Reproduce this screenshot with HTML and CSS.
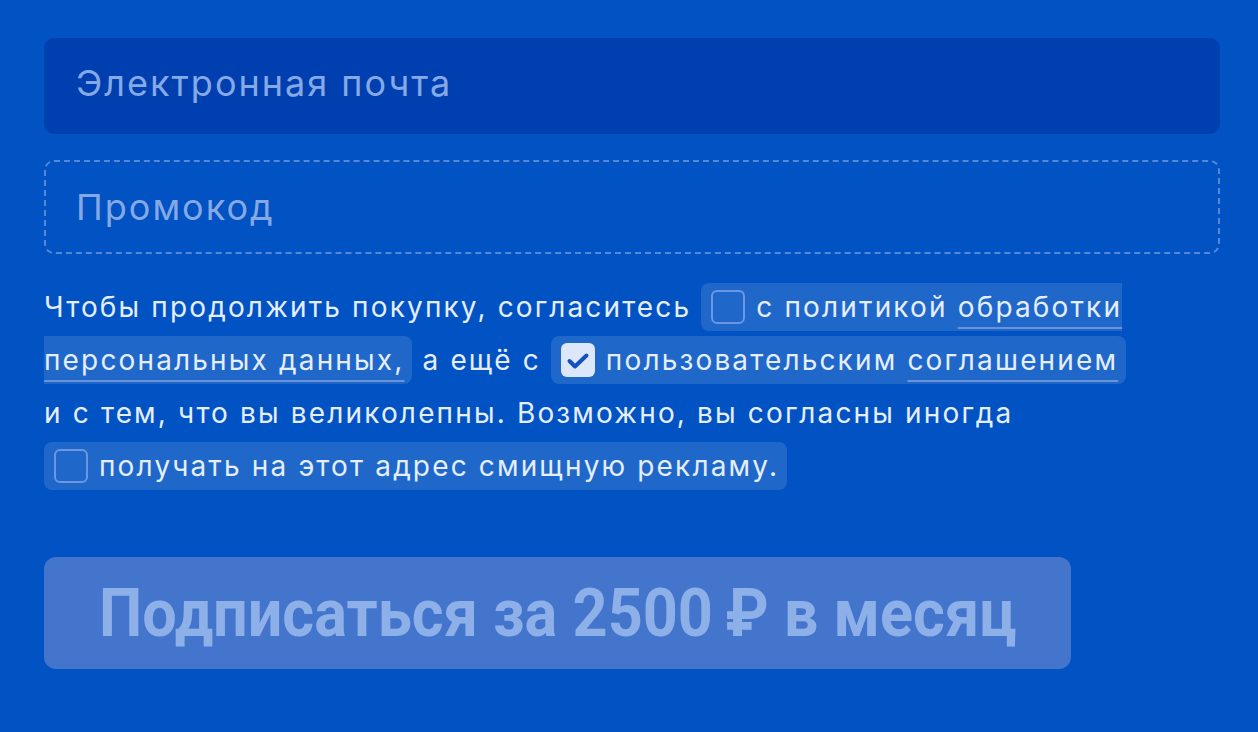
FILE: index.html
```html
<!DOCTYPE html>
<html lang="ru">
<head>
<meta charset="utf-8">
<link rel="stylesheet" href="styles.css">
</head>
<body>
<form class="form">
  <div class="field field-email"><span class="placeholder">Электронная почта</span></div>
  <div class="field field-promo"><span class="placeholder">Промокод</span></div>
  <p class="consent">Чтобы продолжить покупку, согласитесь <span class="chip"><span class="box"></span>с политикой <span class="link">обработки персональных данных,</span></span> а ещё с <span class="chip"><span class="box checked"><svg viewBox="0 0 34 34" width="34" height="34"><path d="M8.5 18l5.5 5.5 11.5-11" fill="none" stroke="#1451c0" stroke-width="4" stroke-linecap="round" stroke-linejoin="round"/></svg></span>пользовательским <span class="link">соглашением</span></span><br>и с тем, что вы великолепны. Возможно, вы согласны иногда<br><span class="chip"><span class="box"></span>получать на этот адрес смищную рекламу.</span></p>
  <button type="button" class="submit"><span class="submit-label">Подписаться за 2500&#8201;₽ в месяц</span></button>
</form>
</body>
</html>
```
FILE: styles.css
```css
html, body {
  margin: 0;
  padding: 0;
  background: #0152c2;
}
body {
  font-family: Inter, Roboto, "Noto Sans", sans-serif;
  width: 1258px;
  height: 732px;
  overflow: hidden;
}
.form {
  padding: 38px 38px 0 44px;
  display: flex;
  flex-direction: column;
  align-items: flex-start;
}
.field {
  box-sizing: border-box;
  width: 1176px;
  border-radius: 10px;
  display: flex;
  align-items: center;
  padding-left: 32px;
}
.field-email {
  height: 96px;
  background: #003fb0;
  padding-bottom: 6px;
}
.field-promo {
  margin-top: 26px;
  height: 94px;
  border: 2px dashed #5688d8;
  padding-left: 30px;
}
.placeholder {
  font-size: 36px;
  color: #86a9e6;
  letter-spacing: 2px;
}
.consent {
  margin: 27px 0 0;
  font-size: 28px;
  letter-spacing: 2.15px;
  line-height: 53px;
  color: #e4eeff;
  width: 1176px;
}
.chip {
  background: rgba(255, 255, 255, 0.12);
  border-radius: 8px;
  padding: 7px 8px 7px 10px;
}
.box {
  display: inline-block;
  box-sizing: border-box;
  width: 34px;
  height: 34px;
  border: 2px solid #6c97e0;
  border-radius: 6px;
  vertical-align: -7px;
  margin-right: 11px;
}
.box.checked {
  background: #dce7fb;
  border: 0;
  display: inline-flex;
  align-items: center;
  justify-content: center;
}
.link {
  text-decoration: underline;
  text-decoration-color: #6a93d9;
  text-decoration-thickness: 2px;
  text-underline-offset: 10px;
}
.submit {
  margin-top: 64px;
  width: 1027px;
  height: 112px;
  border: 0;
  border-radius: 12px;
  background: #4475cc;
  color: #8eb0e8;
  font-family: Roboto, sans-serif;
  font-weight: 700;
  font-size: 66px;
  padding: 0;
  display: flex;
  align-items: center;
  justify-content: center;
}
.submit-label {
  display: inline-block;
  transform: scaleX(0.927);
  white-space: nowrap;
}
```
